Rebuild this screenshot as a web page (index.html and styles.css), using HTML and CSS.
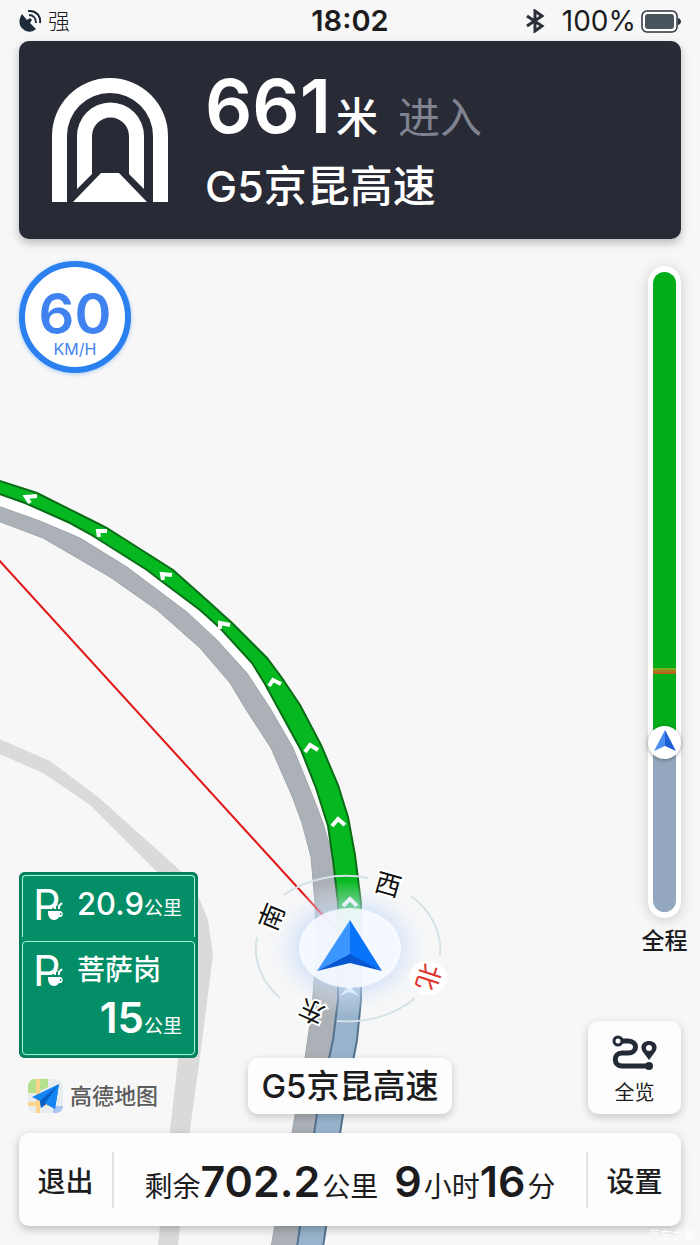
FILE: index.html
```html
<!DOCTYPE html>
<html lang="zh-CN">
<head>
    <meta charset="UTF-8">
    <meta name="viewport" content="width=device-width, initial-scale=1.0">
    <title>导航</title>
    <link rel="stylesheet" href="styles.css">
</head>
<body>
    <div class="screen">
        <!-- Map -->
        <svg class="map" viewBox="0 0 700 1245" preserveAspectRatio="xMidYMid slice">
            <defs>
                <radialGradient id="glow">
                    <stop offset="0.5" stop-color="#bcd6fb" stop-opacity="0.75"/>
                    <stop offset="0.72" stop-color="#d5e4fa" stop-opacity="0.4"/>
                    <stop offset="1" stop-color="#f0f5fc" stop-opacity="0"/>
                </radialGradient>
            </defs>

            <path class="side-road" d="M-5 737 L50 761 L98 797 L182 872 L197 893 L208 920 L213 955 L200 1057 L190 1130 L178 1245 H158 L170 1130 L178 1060 L191 957 L186 925 L176 892 L157 872 L90 805 L43 773 L-5 752 Z"/>

            <path class="road-gap" d="M0 494 L70 523 L147 570 L200 610 L253 662 L280 707 L301 753 L316 790 L327 826 L332 850 L338 903 V950 H330 L333 850 L318 800 L298 753 L270 708 L247 673 L217 640 L187 612 L127 567 L80 538 L0 507 Z"/>
            <path class="grey-road" d="M-2 506 L40 521 L80 538 L127 567 L187 612 L217 640 L247 673 L270 708 L293 748 L313 797 L323 823 L333 857 L338 903 L340 950 L338 1010 L331 1058 L316 1133 L297 1247 H271 L292 1133 L305 1058 L312 1010 L316 950 L315 903 L311 857 L302 823 L292 796 L271 748 L245 708 L230 683 L200 648 L157 610 L110 577 L43 538 L-2 521 Z"/>
            <path class="passed-road" d="M338 940 V1000 L333 1040 L317 1114 L297 1247 H323 L343 1114 L357 1040 L361 1000 V940 Z"/>
            <path class="green-road" d="M-3 480 L37 493 L95 522 L107 528 L173 570 L210 603 L232 623 L267 658 L282 678 L300 705 L321 745 L338 785 L348 817 L355 855 L361 903 V948 H338 V903 L333 860 L328 826 L316 788 L301 750 L278 708 L265 684 L252 663 L220 628 L200 610 L160 580 L147 570 L90 534 L70 523 L25 503 L-3 493 Z"/>

            <g class="chevrons">
                <path d="M37 496 L26 497 L30 503"/>
                <path d="M107 531 L98 531 L99 537"/>
                <path d="M172 575 L162 574 L163 580"/>
                <path d="M230 625 L220 623 L220 629"/>
                <path d="M281 684 L273 680 L269 686"/>
                <path d="M318 750 L310 745 L305 752"/>
                <path d="M345 825 L338 819 L332 826"/>
                <path d="M357 906 L350 899 L343 906"/>
            </g>

            <path class="beeline" d="M-2 559 L350 945"/>

            <!-- Compass -->
            <ellipse cx="349" cy="948" rx="84" ry="68" fill="url(#glow)"/>
            <g class="ring">
                <path d="M284 895 A92 73 0 0 1 368 878"/>
                <path d="M411 896 A92 73 0 0 1 440 956"/>
                <path d="M415 998 A92 73 0 0 1 337 1021"/>
                <path d="M280 998 A92 73 0 0 1 257 937"/>
            </g>
            <path d="M340 996 L349 985 L359 996 L349 992 Z" fill="#dcebfb"/>
            <ellipse cx="350" cy="948" rx="51" ry="40" fill="#fbfdff" fill-opacity="0.84"/>
            <ellipse cx="428" cy="978" rx="19" ry="17" fill="#fff"/>
            <text class="compass" x="0" y="9" transform="translate(388 885) rotate(16)">西</text>
            <text class="compass" x="0" y="9" transform="translate(272 917) rotate(-68)">南</text>
            <text class="compass" x="0" y="9" transform="translate(312 1011) rotate(204)">东</text>
            <text class="compass north" x="0" y="9" transform="translate(428 977) rotate(108)">北</text>

            <path d="M350 920 L317 971 L350 955 Z" fill="#3b96ff"/>
            <path d="M350 920 L382 971 L350 955 Z" fill="#0873fb"/>
            <path d="M317 971 L350 954 L382 971 L350 963 Z" fill="#0556d0"/>
        </svg>

        <header class="status-bar">
            <div class="signal">
                <svg width="23" height="24" viewBox="0 0 23 24">
                    <path d="M3 5 C-1 11 0 17 4 20 C8 24 14 23 17 20 L11 14 L13 11 L11 9 L8 11 Z" fill="#1c2a3a"/>
                    <path d="M10 6 C14 6 17 9 17 14" fill="none" stroke="#1c2a3a" stroke-width="2"/>
                    <path d="M9 2 C17 1 22 7 21 14" fill="none" stroke="#1c2a3a" stroke-width="2"/>
                </svg>
                <span>强</span>
            </div>
            <div class="clock">18:02</div>
            <div class="battery">
                <svg class="bluetooth" width="20" height="24" viewBox="0 0 20 24">
                    <path d="M2 7 L17 17 L10 22 V2 L17 7 L2 17" fill="none" stroke="#2b2f3a" stroke-width="3"/>
                </svg>
                <span>100%</span>
                <svg width="40" height="24" viewBox="0 0 40 24">
                    <rect x="1" y="2" width="35" height="21" rx="5" fill="#fff" stroke="#2b3340" stroke-width="1.5"/>
                    <rect x="4" y="5" width="29" height="15" rx="3" fill="#4a545c"/>
                    <path d="M37 9 C41 10 41 15 37 16 Z" fill="#2b3340"/>
                </svg>
            </div>
        </header>

        <section class="banner">
            <svg width="116" height="124" viewBox="0 0 116 124">
                <g fill="#fff">
                    <path d="M0 124 V58 A58 58 0 0 1 116 58 V124 H101 V58 A43 43 0 0 0 15 58 V124 Z"/>
                    <path d="M25 111 V58 A33.500 33.500 0 0 1 92 58 V111 L77 96 V58 A18.500 18.500 0 0 0 40 58 V96 Z"/>
                    <path d="M21 124 L49 95 H67 L95 124 Z"/>
                </g>
            </svg>
            <div class="turn">
                <p class="distance">661<span class="unit">米</span><span class="action">进入</span></p>
                <p class="next-road">G5京昆高速</p>
            </div>
        </section>

        <main class="content">
            <div class="left">
                <div class="speed">
                    <strong>60</strong>
                    <span>KM/H</span>
                </div>
                <div class="left-bottom">
                    <div class="sign">
                        <div class="panel panel-top">
                            <div class="sign-row">
                                <svg class="parking" width="30" height="34" viewBox="0 0 30 34">
                                    <text x="-2" y="33">P</text>
                                    <path d="M13 24 H24 C29 23 29 31 24 30 C22 34 16 34 14 30 C13 28 13 26 13 24 Z M25 26 V28 C27 28 27 26 25 26 Z" fill="#fff" fill-rule="evenodd"/>
                                    <path d="M16 22 V20 L18 19 M20 22 V19 L22 17 M24 22 V19 L27 16" fill="none" stroke="#fff" stroke-width="2"/>
                                </svg>
                                <p class="rest-distance">20.9<span>公里</span></p>
                            </div>
                        </div>
                        <div class="panel panel-bottom">
                            <div class="sign-row">
                                <svg class="parking" width="30" height="34" viewBox="0 0 30 34">
                                    <text x="-2" y="33">P</text>
                                    <path d="M13 24 H24 C29 23 29 31 24 30 C22 34 16 34 14 30 C13 28 13 26 13 24 Z M25 26 V28 C27 28 27 26 25 26 Z" fill="#fff" fill-rule="evenodd"/>
                                    <path d="M16 22 V20 L18 19 M20 22 V19 L22 17 M24 22 V19 L27 16" fill="none" stroke="#fff" stroke-width="2"/>
                                </svg>
                                <p class="rest-name">菩萨岗</p>
                            </div>
                            <p class="rest-distance big">15<span>公里</span></p>
                        </div>
                    </div>
                    <div class="brand">
                        <svg width="36" height="36" viewBox="0 0 36 36">
                            <rect x="0" y="1" width="35" height="34" rx="7" fill="#e9edf0"/>
                            <path d="M7 1 H20 V9 L8 15 H0 V8 C0 4 3 1 7 1 Z" fill="#b5e08c"/>
                            <path d="M8 1 H12 V35 H8 Z M0 24 H24 V28 H0 Z" fill="#fbd38a"/>
                            <path d="M25 28 H35 C35 32 32 35 28 35 H25 Z" fill="#a9c6f5"/>
                            <path d="M4 19 L31 6 L27 31 L18 26 L13 30 L12 23 Z" fill="#1487f5"/>
                            <path d="M31 6 L12 23 L13 30 L18 26 Z" fill="#0a5fc4"/>
                            <path d="M31 6 L17 25 L27 31 Z" fill="#1487f5"/>
                        </svg>
                        <span>高德地图</span>
                    </div>
                </div>
            </div>

            <div class="current-road">G5京昆高速</div>

            <div class="right">
                <div class="trip">
                    <div class="track">
                        <div class="ahead">
                            <div class="jam"></div>
                        </div>
                        <div class="passed">
                            <div class="marker">
                                <svg width="22" height="22" viewBox="0 0 22 22">
                                    <path d="M11 0 L0 21 L11 16 Z" fill="#4b8df0"/>
                                    <path d="M11 0 L22 21 L11 16 Z" fill="#1f5fd8"/>
                                </svg>
                            </div>
                        </div>
                    </div>
                    <span class="trip-label">全程</span>
                </div>
                <button class="overview" type="button">
                    <svg width="46" height="36" viewBox="0 0 46 36">
                        <path d="M7 6 H16 C26 6 26 18 16 18 H10 C1 18 1 31 10 31 H37" fill="none" stroke="#232a38" stroke-width="5"/>
                        <circle cx="6" cy="6" r="4" fill="#fff" stroke="#232a38" stroke-width="3"/>
                        <circle cx="37" cy="31" r="4" fill="#232a38"/>
                        <path d="M37 25 L31 17 C27 11 31 6 37 6 C43 6 47 11 43 17 Z M37 10 A3 3 0 1 0 37 16 A3 3 0 1 0 37 10 Z" fill="#232a38" fill-rule="evenodd"/>
                    </svg>
                    <span>全览</span>
                </button>
            </div>
        </main>

        <footer class="bottom-bar">
            <button class="bar-btn" type="button">退出</button>
            <p class="remaining">剩余<b>702.2</b>公里<b class="hours">9</b>小时<b>16</b>分</p>
            <button class="bar-btn" type="button">设置</button>
        </footer>

        <span class="watermark">汽车之家</span>
    </div>
</body>
</html>
```
FILE: styles.css
```css
* {
    box-sizing: border-box;
}

body {
    margin: 0;
    font-family: Inter, "Noto Sans CJK SC", sans-serif;
    color: #1c1c1e;
    background-color: #f7f7f7;
}

p {
    margin: 0;
}

button {
    font-family: inherit;
    color: inherit;
    border: none;
    padding: 0;
    cursor: pointer;
}

svg {
    display: block;
    flex-shrink: 0;
}

.screen {
    position: relative;
    display: flex;
    flex-direction: column;
    min-height: 100vh;
    overflow: hidden;
}

/* Map */
.map {
    position: absolute;
    top: 0;
    left: 0;
    width: 100%;
    height: 100%;
}

.side-road {
    fill: #dadada;
}

.road-gap {
    fill: #fff;
}

.grey-road {
    fill: #abb1b6;
    stroke: #a0a6ab;
    stroke-width: 1;
}

.passed-road {
    fill: #98b3cc;
    stroke: #537391;
    stroke-width: 2;
}

.green-road {
    fill: #05b81f;
    stroke: #0b6c18;
    stroke-width: 2;
}

.chevrons {
    fill: none;
    stroke: #fff;
    stroke-width: 4;
}

.beeline {
    stroke: #e01414;
    stroke-width: 2;
}

.ring {
    fill: none;
    stroke: #d5e2e8;
    stroke-width: 2;
}

.compass {
    font-size: 26px;
    font-weight: 400;
    text-anchor: middle;
    fill: #111;
    stroke: #fff;
    stroke-width: 4;
    paint-order: stroke;
}

.compass.north {
    fill: #e0342c;
}

/* Status bar */
.status-bar {
    position: relative;
    display: grid;
    grid-template-columns: 1fr auto 1fr;
    align-items: center;
    height: 41px;
    padding: 0 19px;
    font-size: 28px;
}

.signal {
    display: flex;
    align-items: center;
    gap: 6px;
    font-size: 22px;
    font-weight: 300;
    line-height: 24px;
}

.clock {
    font-size: 29px;
    font-weight: 600;
}

.battery {
    display: flex;
    align-items: center;
    justify-content: flex-end;
    gap: 5px;
}

.bluetooth {
    margin-right: 12px;
}

/* Turn banner */
.banner {
    position: relative;
    display: flex;
    align-items: center;
    gap: 37px;
    height: 198px;
    margin: 0 19px;
    padding: 0 33px;
    color: #fff;
    background-color: #282b36;
    border-radius: 10px;
    box-shadow: 0 4px 10px rgba(0, 0, 0, 0.25);
}

.distance {
    margin-bottom: 12px;
    font-size: 74px;
    font-weight: 600;
    line-height: 80px;
}

.unit,
.action {
    font-size: 42px;
    font-weight: 500;
    line-height: 42px;
}

.unit {
    margin-left: 5px;
}

.action {
    margin-left: 20px;
    color: #808391;
    font-weight: 400;
}

.next-road {
    font-size: 43px;
    font-weight: 500;
    line-height: 56px;
}

/* Area over the map */
.content {
    position: relative;
    flex: 1;
    display: grid;
    grid-template-columns: 1fr auto 1fr;
    padding: 22px 19px 19px;
}

.left {
    display: flex;
    flex-direction: column;
    justify-content: space-between;
    align-items: flex-start;
}

.speed {
    display: flex;
    flex-direction: column;
    align-items: center;
    width: 112px;
    height: 112px;
    padding-top: 20px;
    color: #3f82f0;
    background-color: #fff;
    border: 6px solid #2b80f0;
    border-radius: 50%;
    box-shadow: 0 1px 4px rgba(43, 128, 240, 0.4);
}

.speed strong {
    font-size: 56px;
    font-weight: 600;
    line-height: 54px;
}

.speed span {
    font-size: 16px;
    line-height: 16px;
}

.left-bottom {
    display: flex;
    flex-direction: column;
    gap: 20px;
}

.sign {
    display: flex;
    flex-direction: column;
    gap: 4px;
    width: 179px;
    padding: 3px;
    color: #fff;
    background-color: #048e67;
    border-radius: 6px;
    box-shadow: inset 0 0 0 2px #047c5c;
}

.panel {
    padding: 0 12px;
    border: 1px solid #a8f0d4;
    border-radius: 4px;
}

.panel-top {
    height: 62px;
    padding-top: 6px;
    border-bottom: none;
    border-radius: 4px 4px 0 0;
}

.panel-bottom {
    height: 114px;
    padding-top: 6px;
}

.sign-row {
    display: flex;
    align-items: center;
    gap: 12px;
    height: 44px;
}

.parking {
    overflow: visible;
}

.parking text {
    font-size: 43px;
    font-weight: 400;
    fill: #fff;
}

.rest-distance {
    font-size: 31px;
    font-weight: 500;
    line-height: 44px;
    white-space: nowrap;
}

.rest-distance span {
    font-size: 19px;
    font-weight: 400;
    line-height: 19px;
}

.rest-distance.big {
    font-size: 42px;
    font-weight: 600;
    line-height: 52px;
    text-align: right;
}

.rest-name {
    font-size: 28px;
    font-weight: 500;
    line-height: 42px;
}

.brand {
    display: flex;
    align-items: center;
    gap: 6px;
    margin-left: 9px;
    color: #5c5c5c;
    font-size: 22px;
    font-weight: 500;
    line-height: 36px;
}

.current-road {
    align-self: end;
    padding: 0 13px;
    font-size: 33px;
    font-weight: 500;
    line-height: 56px;
    background-color: #fdfdfd;
    border-radius: 10px;
    box-shadow: 0 3px 8px rgba(0, 0, 0, 0.2);
}

.right {
    display: flex;
    flex-direction: column;
    align-items: flex-end;
    padding-top: 5px;
}

.trip {
    flex: 1;
    display: flex;
    flex-direction: column;
    align-items: center;
    width: 33px;
}

.track {
    flex: 1;
    display: flex;
    flex-direction: column;
    width: 33px;
    padding: 6px 5px;
    background-color: #fff;
    border-radius: 17px;
    box-shadow: 0 2px 14px rgba(0, 0, 0, 0.18);
}

.ahead {
    flex: 472;
    display: flex;
    flex-direction: column;
    justify-content: flex-end;
    background-color: #03ad1a;
    border-radius: 12px 12px 0 0;
}

.jam {
    height: 6px;
    margin-bottom: 69px;
    background-color: #a8791a;
    border-top: 2px solid #7fae1d;
    border-bottom: 2px solid #b8641c;
}

.passed {
    position: relative;
    flex: 169;
    background-color: #93a7be;
    border-radius: 0 0 12px 12px;
}

.marker {
    position: absolute;
    top: -17px;
    left: -5px;
    display: flex;
    align-items: center;
    justify-content: center;
    width: 33px;
    height: 33px;
    padding-bottom: 3px;
    background-color: #fff;
    border-radius: 50%;
    box-shadow: 0 1px 4px rgba(0, 0, 0, 0.35);
}

.trip-label {
    margin: 7px 0 64px;
    font-size: 23px;
    font-weight: 500;
    line-height: 32px;
    white-space: nowrap;
}

.overview {
    display: flex;
    flex-direction: column;
    align-items: center;
    justify-content: center;
    gap: 8px;
    width: 93px;
    height: 93px;
    padding-top: 6px;
    font-size: 20px;
    line-height: 28px;
    background-color: #fdfdfd;
    border-radius: 10px;
    box-shadow: 0 3px 10px rgba(0, 0, 0, 0.2);
}

/* Bottom bar */
.bottom-bar {
    position: relative;
    display: flex;
    align-items: center;
    height: 93px;
    margin: 0 19px 19px;
    background-color: #fdfdfd;
    border-radius: 10px;
    box-shadow: 0 3px 10px rgba(0, 0, 0, 0.25);
}

.bar-btn {
    width: 95px;
    height: 56px;
    font-size: 28px;
    font-weight: 500;
    background: none;
    border-right: 2px solid #e2e2e2;
}

.bar-btn:last-child {
    border-right: none;
    border-left: 2px solid #e2e2e2;
}

.remaining {
    flex: 1;
    padding-top: 3px;
    text-align: center;
    font-size: 28px;
    line-height: 28px;
    white-space: nowrap;
}

.remaining b {
    margin-right: 2px;
    font-size: 43px;
    font-weight: 600;
    line-height: 56px;
}

.remaining .hours {
    margin-left: 16px;
}

.watermark {
    position: absolute;
    right: 4px;
    bottom: 2px;
    font-size: 12px;
    color: #fff;
}
```
